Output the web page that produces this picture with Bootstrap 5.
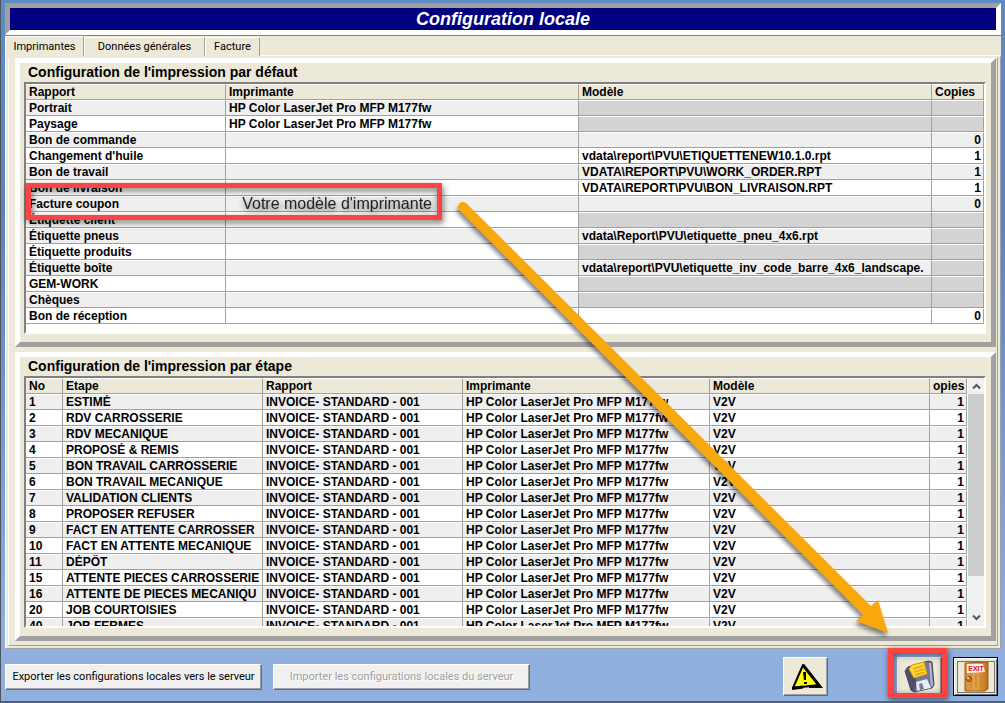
<!DOCTYPE html>
<html lang="fr">
<head>
<meta charset="utf-8">
<meta name="viewport" content="width=device-width, initial-scale=1">
<title>Configuration locale</title>
<link href="https://cdn.jsdelivr.net/npm/bootstrap@5.3.0/dist/css/bootstrap.min.css" rel="stylesheet">
<style>
  :root { --face: #ece9d8; --shade: #a0a0a0; --alert: #ff4343; }
  body {
    font-family: "Liberation Sans", Arial, sans-serif;
    font-size: 12px; line-height: 15px; color: #000;
    background: linear-gradient(#5f8bc4, #5a84b8 30%, #7399cf 60%, #8fb0de 92%) no-repeat #8fb0de;
    border-left: 1px solid #4d5560;
    border-bottom: 2px solid #50607c;
    min-height: 100vh;
  }
  .window-area { padding: 3px 4px 0; }
  .title-bar {
    border: 5px solid; border-color: var(--shade) #fff #fff var(--shade);
    background: #000080; color: #fff; font: italic bold 18px/22px "Liberation Sans", Arial, sans-serif;
  }
  .tab-strip { background: var(--face); margin-top: 1px; height: 20px; border-bottom: 1px solid #fff; }
  .tab-strip .nav-link {
    color: #000; height: 19px; padding: 2px 0 0; margin-top: 1px; font: 11px/14px Roboto, sans-serif; text-align: center;
    border: 0; border-radius: 0; border-top: 1px solid #fff; border-left: 1px solid #fff; border-right: 1px solid var(--shade);
    background: var(--face);
  }
  .tab-strip .nav-link.active { height: 20px; margin-top: 0; padding-top: 3px; border-color: #fff var(--shade) #fff #fff; }
  .tab-a { width: 79px; } .tab-b { width: 121px; } .tab-c { width: 55px; }
  .tab-body { background: var(--face); padding: 0 2px 2px; border: 1px solid; border-color: transparent var(--shade) var(--shade) #fff; }
  .tab-inner { border: 1px solid; border-color: transparent var(--shade) var(--shade) #fff; padding: 0 1px 4px 6px; }
  .group-frame { border: 5px solid; border-color: #fff var(--shade) var(--shade) #fff; padding: 0 5px 8px 4px; margin-bottom: 5px; }
  .group-frame:last-child { margin-bottom: 0; }
  .group-frame h2 { font-size: 14px; font-weight: bold; line-height: 19px; margin: 0; padding-left: 4px; }
  .grid-box { position: relative; background: #fff; border: 2px solid; border-color: #808080 #fff #fff #808080; }
  .grid-box.tall, .grid-box.short { height: 252px; }
  .print-grid { table-layout: fixed; width: 100%; border-collapse: separate; border-spacing: 0; font-weight: bold; }
  .print-grid th, .print-grid td {
    height: 16px; padding: 0 2px 0 3px; line-height: 14px; overflow: hidden; white-space: nowrap; font-size: 12px;
    border: solid var(--shade); border-width: 1px 1px 1px 0; border-top-color: #fff;
  }
  .print-grid th { background: var(--face); }
  .print-grid tbody tr:nth-child(odd) { background: #efefef; }
  .print-grid .off { background: #d3d3d3; }
  .print-grid td:last-child { text-align: right; }
  .scroll-rail { width: 17px; background: #f0f0f0; border-left: 1px solid #fff; }
  .scroll-thumb { background: #cdcdcd; height: 182px; }
  .scroll-rail button { border: 0; padding: 0; background: none; height: 16px; line-height: 0; width: 100%; }
  .mark-row { position: absolute; left: 0; top: 99px; width: 416px; height: 37px; border: 5px solid var(--alert); filter: drop-shadow(1px 3px 3px #0009);
    font-size: 16px; line-height: 31px; text-align: right; padding-right: 5px; color: #222; }
  .bottom-bar { padding: 8px 3px 4px 0; }
  .act { border: 1px solid; border-color: #fff #696969 #696969 #fff; box-shadow: inset -1px -1px #a0a0a0; background: #f0f0f0; color: #000; font: 11px/15px Roboto, sans-serif; white-space: nowrap; padding: 0; height: 26px; width: 257px; }
  .act-import { margin-left: 11px; }
  .act:disabled { color: #a0a0a0; text-shadow: 1px 1px #fff; }
  .pic { border: 1px solid; border-color: #fff #696969 #696969 #fff; box-shadow: inset -1px -1px #a0a0a0; background: var(--face); padding: 0; width: 45px; height: 39px; line-height: 0; }
  .pic-exit { border: 1px solid #000; box-shadow: inset 1px 1px #fff, inset -1px -1px #696969; }
  .save-slot { margin: 0 11px 0 69px; }
  .mark-save { position: absolute; left: -9px; top: -9px; width: 59px; height: 50px; border: 5px solid var(--alert); filter: drop-shadow(1px 2px 3px #0009); pointer-events: none; }
  .arrow-layer { position: absolute; left: 0; top: 0; pointer-events: none; filter: drop-shadow(-1px 4px 2px #0007); }
</style>
</head>
<body class="position-relative">
<main class="window-area">
  <h1 class="title-bar text-center mb-0">Configuration locale</h1>
  <nav class="tab-strip nav" role="tablist">
    <a class="nav-link active tab-a" href="#imprimantes" role="tab">Imprimantes</a>
    <a class="nav-link tab-b" href="#donnees" role="tab">Données générales</a>
    <a class="nav-link tab-c" href="#facture" role="tab">Facture</a>
  </nav>
  <div class="tab-body" id="imprimantes"><div class="tab-inner">
    <section class="group-frame">
      <h2>Configuration de l'impression par défaut</h2>
      <div class="grid-box tall">
        <table class="print-grid">
          <colgroup><col style="width:200px"><col style="width:353px"><col><col style="width:52px"></colgroup>
          <thead><tr><th>Rapport</th><th>Imprimante</th><th>Modèle</th><th>Copies</th></tr></thead>
          <tbody>
            <tr><td>Portrait</td><td>HP Color LaserJet Pro MFP M177fw</td><td class="off"></td><td class="off"></td></tr>
            <tr><td>Paysage</td><td>HP Color LaserJet Pro MFP M177fw</td><td class="off"></td><td class="off"></td></tr>
            <tr><td>Bon de commande</td><td></td><td></td><td>0</td></tr>
            <tr><td>Changement d'huile</td><td></td><td>vdata\report\PVU\ETIQUETTENEW10.1.0.rpt</td><td>1</td></tr>
            <tr><td>Bon de travail</td><td></td><td>VDATA\REPORT\PVU\WORK_ORDER.RPT</td><td>1</td></tr>
            <tr><td>Bon de livraison</td><td></td><td>VDATA\REPORT\PVU\BON_LIVRAISON.RPT</td><td>1</td></tr>
            <tr><td>Facture coupon</td><td></td><td></td><td>0</td></tr>
            <tr><td>Étiquette client</td><td></td><td class="off"></td><td class="off"></td></tr>
            <tr><td>Étiquette pneus</td><td></td><td>vdata\Report\PVU\etiquette_pneu_4x6.rpt</td><td class="off"></td></tr>
            <tr><td>Étiquette produits</td><td></td><td class="off"></td><td class="off"></td></tr>
            <tr><td>Étiquette boîte</td><td></td><td>vdata\report\PVU\etiquette_inv_code_barre_4x6_landscape.</td><td class="off"></td></tr>
            <tr><td>GEM-WORK</td><td></td><td class="off"></td><td class="off"></td></tr>
            <tr><td>Chèques</td><td></td><td class="off"></td><td class="off"></td></tr>
            <tr><td>Bon de réception</td><td></td><td></td><td>0</td></tr>
          </tbody>
        </table>
        <div class="mark-row">Votre modèle d'imprimante</div>
      </div>
    </section>
    <section class="group-frame">
      <h2>Configuration de l'impression par étape</h2>
      <div class="grid-box short d-flex overflow-hidden">
        <div class="flex-grow-1 overflow-hidden">
        <table class="print-grid">
          <colgroup><col style="width:37px"><col style="width:200px"><col style="width:200px"><col style="width:247px"><col><col style="width:37px"></colgroup>
          <thead><tr><th>No</th><th>Etape</th><th>Rapport</th><th>Imprimante</th><th>Modèle</th><th>opies</th></tr></thead>
          <tbody>
            <tr><td>1</td><td>ESTIMÉ</td><td>INVOICE- STANDARD - 001</td><td>HP Color LaserJet Pro MFP M177fw</td><td>V2V</td><td>1</td></tr>
            <tr><td>2</td><td>RDV CARROSSERIE</td><td>INVOICE- STANDARD - 001</td><td>HP Color LaserJet Pro MFP M177fw</td><td>V2V</td><td>1</td></tr>
            <tr><td>3</td><td>RDV MECANIQUE</td><td>INVOICE- STANDARD - 001</td><td>HP Color LaserJet Pro MFP M177fw</td><td>V2V</td><td>1</td></tr>
            <tr><td>4</td><td>PROPOSÉ &amp; REMIS</td><td>INVOICE- STANDARD - 001</td><td>HP Color LaserJet Pro MFP M177fw</td><td>V2V</td><td>1</td></tr>
            <tr><td>5</td><td>BON TRAVAIL CARROSSERIE</td><td>INVOICE- STANDARD - 001</td><td>HP Color LaserJet Pro MFP M177fw</td><td>V2V</td><td>1</td></tr>
            <tr><td>6</td><td>BON TRAVAIL MECANIQUE</td><td>INVOICE- STANDARD - 001</td><td>HP Color LaserJet Pro MFP M177fw</td><td>V2V</td><td>1</td></tr>
            <tr><td>7</td><td>VALIDATION CLIENTS</td><td>INVOICE- STANDARD - 001</td><td>HP Color LaserJet Pro MFP M177fw</td><td>V2V</td><td>1</td></tr>
            <tr><td>8</td><td>PROPOSER REFUSER</td><td>INVOICE- STANDARD - 001</td><td>HP Color LaserJet Pro MFP M177fw</td><td>V2V</td><td>1</td></tr>
            <tr><td>9</td><td>FACT EN ATTENTE CARROSSER</td><td>INVOICE- STANDARD - 001</td><td>HP Color LaserJet Pro MFP M177fw</td><td>V2V</td><td>1</td></tr>
            <tr><td>10</td><td>FACT EN ATTENTE MECANIQUE</td><td>INVOICE- STANDARD - 001</td><td>HP Color LaserJet Pro MFP M177fw</td><td>V2V</td><td>1</td></tr>
            <tr><td>11</td><td>DÉPÔT</td><td>INVOICE- STANDARD - 001</td><td>HP Color LaserJet Pro MFP M177fw</td><td>V2V</td><td>1</td></tr>
            <tr><td>15</td><td>ATTENTE PIECES CARROSSERIE</td><td>INVOICE- STANDARD - 001</td><td>HP Color LaserJet Pro MFP M177fw</td><td>V2V</td><td>1</td></tr>
            <tr><td>16</td><td>ATTENTE DE PIECES MECANIQU</td><td>INVOICE- STANDARD - 001</td><td>HP Color LaserJet Pro MFP M177fw</td><td>V2V</td><td>1</td></tr>
            <tr><td>20</td><td>JOB COURTOISIES</td><td>INVOICE- STANDARD - 001</td><td>HP Color LaserJet Pro MFP M177fw</td><td>V2V</td><td>1</td></tr>
            <tr><td>40</td><td>JOB FERMES</td><td>INVOICE- STANDARD - 001</td><td>HP Color LaserJet Pro MFP M177fw</td><td>V2V</td><td>1</td></tr>
          </tbody>
        </table>
        </div>
        <div class="scroll-rail d-flex flex-column flex-shrink-0">
          <button type="button" aria-label="Défiler vers le haut"><svg width="9" height="8" viewBox="0 0 9 8"><path d="M1 6.500 4.500 3 8 6.500" fill="none" stroke="#555" stroke-width="2"/></svg></button>
          <div class="scroll-thumb"></div>
          <button type="button" class="mt-auto" aria-label="Défiler vers le bas"><svg width="9" height="8" viewBox="0 0 9 8"><path d="M1 1.500 4.500 5 8 1.500" fill="none" stroke="#555" stroke-width="2"/></svg></button>
        </div>
      </div>
    </section>
  </div></div>
  <footer class="bottom-bar d-flex align-items-center">
    <button type="button" class="act">Exporter les configurations locales vers le serveur</button>
    <button type="button" class="act act-import" disabled>Importer les configurations locales du serveur</button>
    <button type="button" class="pic ms-auto" aria-label="Avertissement">
      <svg width="34" height="30" viewBox="0 0 34 30"><path d="M14 3 30 23 4 26Z" fill="#ff0" stroke="#000" stroke-width="2" stroke-linejoin="round"/><path d="M14 3 31 24.500H20" fill="none" stroke="#000" stroke-width="3"/><path d="M3 26.500 14 25" stroke="#000" stroke-width="3"/><path d="M14 10h3l0 8h-2z"/><path d="M15 20h3v2h-3z"/></svg>
    </button>
    <div class="save-slot position-relative">
      <button type="button" class="pic" aria-label="Enregistrer">
        <svg width="32" height="34" viewBox="0 0 32 34"><path d="M1 11 4 7 24 1l4 1 2 23-2 3-18 4-3-2Z" fill="#74769a" stroke="#42425c"/><path d="M1 11 4 7l3 1 6 15-3 9-3-2Z" fill="#4e5068"/><path d="M5 9 8 5 20 2l3 12-13 4Z" fill="#ffd92e" stroke="#d99b14"/><path d="m9 9 10-3m-9 6 10-3m-9 6 10-3" stroke="#e7a51c" stroke-width="1.500"/><path d="m12 22 11-3 4 9-14 3Z" fill="#e9ebf5"/><path d="m15 24 3-1 2 6-4 1Z" fill="#777a98"/><path d="m26 3 2 23" stroke="#b5b7cf" stroke-width="2"/></svg>
      </button>
      <div class="mark-save"></div>
    </div>
    <button type="button" class="pic pic-exit" aria-label="Quitter">
      <svg width="40" height="34" viewBox="0 0 40 34"><defs><linearGradient id="wood"><stop stop-color="#d88d36"/><stop offset=".5" stop-color="#e6a44b"/><stop offset="1" stop-color="#b86f1c"/></linearGradient></defs><rect x="1.500" y="1.500" width="37" height="31" fill="none" stroke="#000" stroke-dasharray="1 1"/><path d="M9 3 32 2v27l-3 2H9Z" fill="url(#wood)" stroke="#9a5b17"/><path d="M15 14v14m5-14v14m5-14v14" stroke="#c47b28"/><path d="M11 4h16l2 8-18 1Z" fill="#f5f3f2"/><text x="20" y="11" font-size="7" font-weight="bold" font-family="Liberation Sans, sans-serif" text-anchor="middle" fill="#e01020">EXIT</text><circle cx="13" cy="19" r="2.500" fill="#c67a28" stroke="#7d4711"/><circle cx="12" cy="18" r="1" fill="#ffe2a2"/></svg>
    </button>
  </footer>
</main>
<svg class="arrow-layer" width="900" height="650" viewBox="1 0 900 650" aria-hidden="true"><circle cx="463" cy="207" r="5" fill="#f9a80c"/><path d="M459.500 210.500 466.500 203.500 871 606 878 600 888 633 856 621 863 615Z" fill="#f9a80c"/></svg>
<script src="https://cdn.jsdelivr.net/npm/bootstrap@5.3.0/dist/js/bootstrap.bundle.min.js"></script>
</body>
</html>
